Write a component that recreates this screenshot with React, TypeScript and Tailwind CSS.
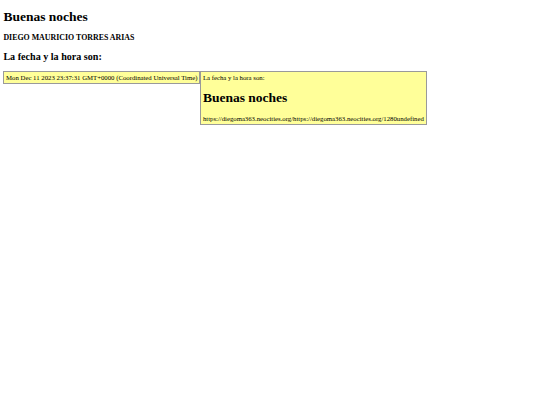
import React from 'react';

const App: React.FC = () => {
    return (
        <div className="min-h-screen bg-white px-[3.4px] pt-[0.1px] text-black font-['Liberation_Serif',serif]">
            <h1 className="mt-[8.5px] mb-[9px] text-[13.5px] font-bold leading-[1.15]">Buenas noches</h1>
            <h3 className="my-[9px] text-[7.9px] font-bold leading-[1.15]">DIEGO MAURICIO TORRES ARIAS</h3>
            <h2 className="my-[8.2px] text-[10.1px] font-bold leading-[1.15]">La fecha y la hora son:</h2>

            <div className="flex items-start text-[6.75px] leading-[1.15]">
                <div className="border border-[#9a9a9a] bg-[#ffff99] p-[1.7px]">
                    Mon Dec 11 2023 23:37:31 GMT+0000 (Coordinated Universal Time)
                </div>
                <div className="border border-[#9a9a9a] bg-[#ffff99] p-[1.7px]">
                    <p>La fecha y la hora son:</p>
                    <h1 className="my-[9px] text-[13.5px] font-bold leading-[1.15]">Buenas noches</h1>
                    <p>https://diegoma363.neocities.org/https://diegoma363.neocities.org/1280undefined</p>
                </div>
            </div>
        </div>
    );
};

export default App;
